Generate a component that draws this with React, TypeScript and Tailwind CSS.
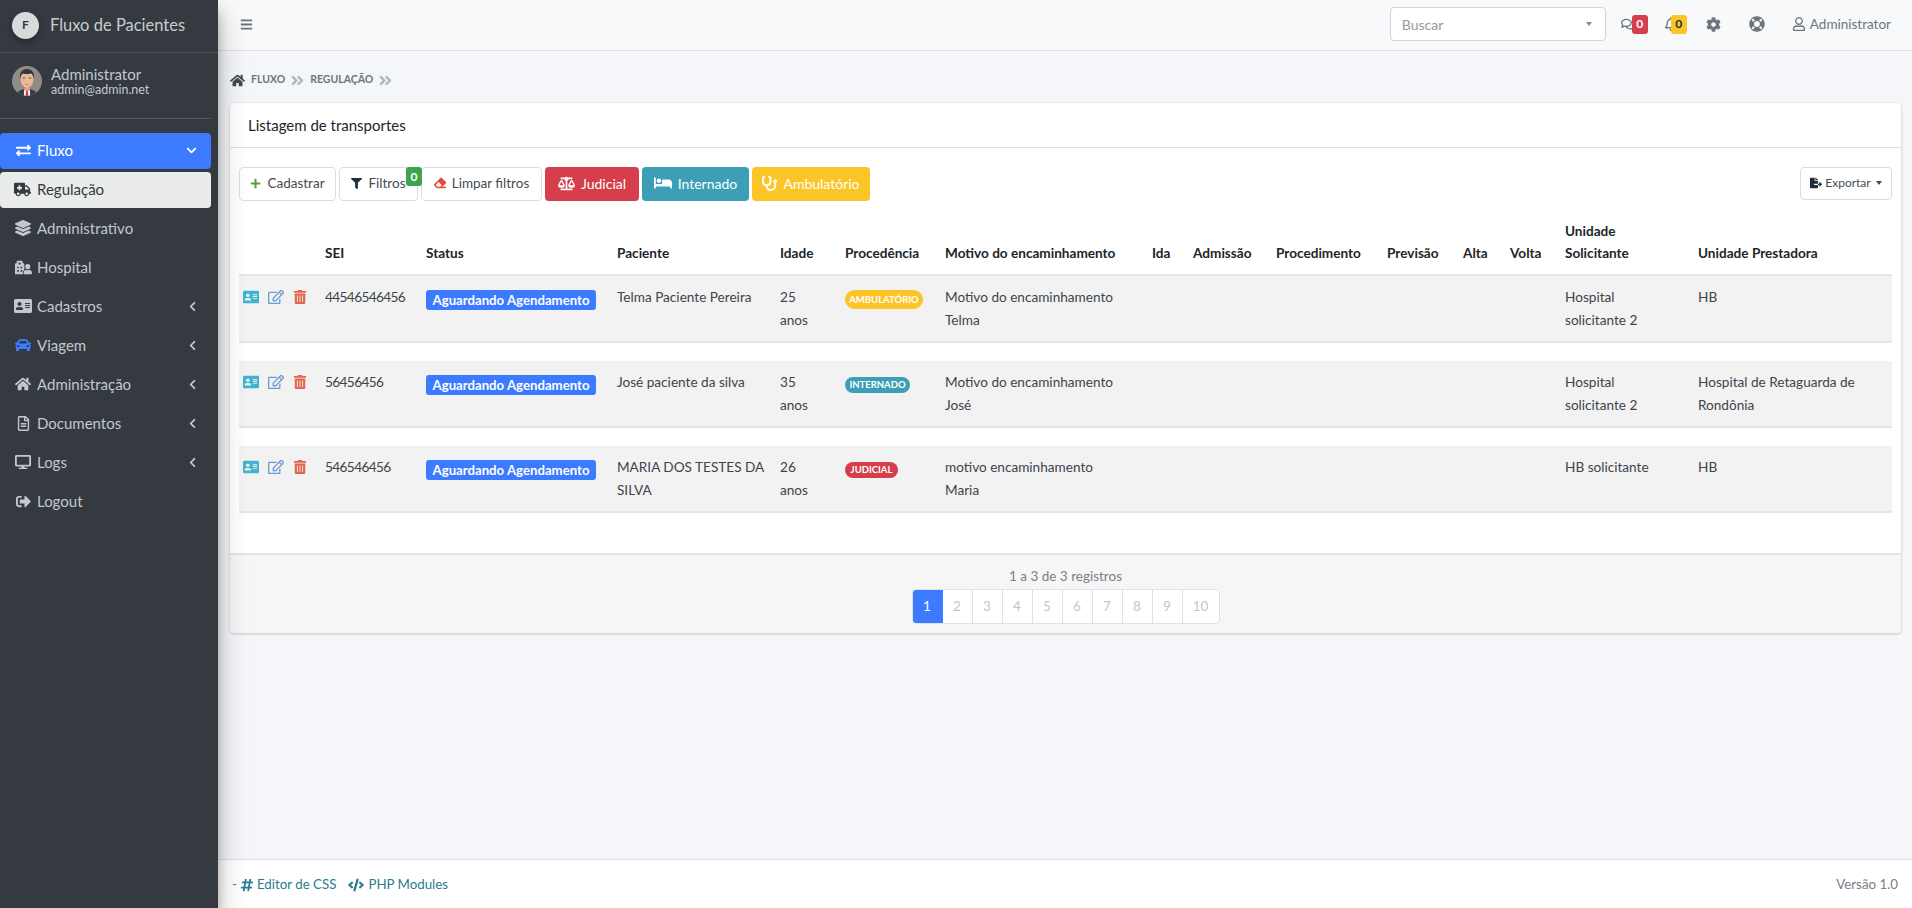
import { Fragment, type ReactNode } from "react"
import {
  FaAddressCard,
  FaAmbulance,
  FaAngleDoubleRight,
  FaBalanceScale,
  FaBars,
  FaBed,
  FaCar,
  FaChevronDown,
  FaChevronLeft,
  FaCode,
  FaCog,
  FaDesktop,
  FaEraser,
  FaExchangeAlt,
  FaFileExport,
  FaFilter,
  FaHashtag,
  FaHome,
  FaHospitalUser,
  FaLayerGroup,
  FaLifeRing,
  FaPlus,
  FaRegBell,
  FaRegComments,
  FaRegEdit,
  FaRegFileAlt,
  FaRegUser,
  FaSignOutAlt,
  FaStethoscope,
  FaTrashAlt,
} from "react-icons/fa"

const menu = [
  { label: "Administrativo", icon: <FaLayerGroup className="text-[16px]" /> },
  { label: "Hospital", icon: <FaHospitalUser className="text-[17px]" /> },
  { label: "Cadastros", icon: <FaAddressCard className="text-[18px]" />, arrow: true },
  { label: "Viagem", icon: <FaCar className="text-[16px] text-[#3c7bff]" />, arrow: true },
  { label: "Administração", icon: <FaHome className="text-[16px]" />, arrow: true },
  { label: "Documentos", icon: <FaRegFileAlt className="text-[15px]" />, arrow: true },
  { label: "Logs", icon: <FaDesktop className="text-[16px]" />, arrow: true },
  { label: "Logout", icon: <FaSignOutAlt className="text-[15px]" /> },
]

const columns = [
  { label: "", width: "w-[78px]" },
  { label: "SEI", width: "w-[101px]" },
  { label: "Status", width: "w-[191px]" },
  { label: "Paciente", width: "w-[163px]" },
  { label: "Idade", width: "w-[65px]" },
  { label: "Procedência", width: "w-[100px]" },
  { label: "Motivo do encaminhamento", width: "w-[207px]" },
  { label: "Ida", width: "w-[41px]" },
  { label: "Admissão", width: "w-[83px]" },
  { label: "Procedimento", width: "w-[111px]" },
  { label: "Previsão", width: "w-[76px]" },
  { label: "Alta", width: "w-[47px]" },
  { label: "Volta", width: "w-[55px]" },
  { label: "Unidade Solicitante", width: "w-[133px] " },
  { label: "Unidade Prestadora", width: "w-[202px]" },
]

const rows = [
  {
    sei: "44546546456",
    paciente: "Telma Paciente Pereira",
    idade: "25",
    origem: "AMBULATÓRIO",
    origemClass: "bg-[#fcc527] h-[19px] w-[78px]",
    motivo: "Motivo do encaminhamento",
    nome: "Telma",
    solicitante: ["Hospital", "solicitante 2"],
    prestadora: "HB",
  },
  {
    sei: "56456456",
    paciente: "José paciente da silva",
    idade: "35",
    origem: "INTERNADO",
    origemClass: "bg-[#3c9fb6] h-[16px] w-[65px]",
    motivo: "Motivo do encaminhamento",
    nome: "José",
    solicitante: ["Hospital", "solicitante 2"],
    prestadora: "Hospital de Retaguarda de Rondônia",
  },
  {
    sei: "546546456",
    paciente: "MARIA DOS TESTES DA SILVA",
    idade: "26",
    origem: "JUDICIAL",
    origemClass: "bg-[#d43f4b] h-[16px] w-[53px]",
    motivo: "motivo encaminhamento",
    nome: "Maria",
    solicitante: ["HB solicitante"],
    prestadora: "HB",
  },
]

function Avatar() {
  return (
    <svg viewBox="0 0 30 30" className="h-[30px] w-[30px] shrink-0 rounded-full">
      <rect width="30" height="30" fill="#8f8c87" />
      <path d="M4 30c1-5 5-6 8-7h6c3 1 7 2 8 7z" fill="#3a3d42" />
      <path d="M12 23l3 3 3-3v7h-6z" fill="#f4f4f4" />
      <path d="M14.2 25h1.6l.6 5h-2.8z" fill="#d8343c" />
      <rect x="12.5" y="18" width="5" height="7" fill="#dca27f" />
      <ellipse cx="15" cy="13.5" rx="6.4" ry="8" fill="#eab998" />
      <path d="M8 13c-1-7 3-10 7-10s8 3 7 10c-.6-3-1.4-5-3-5.500-3 .8-6 .8-8 0-1.600.5-2.400 2.500-3 5.500z" fill="#33363a" />
      <path d="M10.500 12h3M16.500 12h3" stroke="#5b4034" strokeWidth=".8" />
      <path d="M13 18.500h4" stroke="#b9745f" strokeWidth=".7" />
    </svg>
  )
}

function Sidebar() {
  return (
    <aside className="relative z-10 flex h-full w-[218px] shrink-0 flex-col bg-[#343a40] pr-[7px] text-[16px] text-[#c2c7d0] shadow-[0_14px_28px_rgba(0,0,0,0.25),0_10px_10px_rgba(0,0,0,0.22)]">
      <div className="-mr-[7px] flex h-[53px] items-center gap-[11px] border-b border-[#4b545c] pb-[2px] pl-[12px]">
        <span className="flex h-[27px] w-[27px] items-center justify-center rounded-full bg-[#d9dadc] text-[12px] font-bold text-[#343a40] shadow-[0_3px_6px_rgba(0,0,0,0.3)]">
          F
        </span>
        <span className="text-[16.500px] text-[#c9cccf]">Fluxo de Pacientes</span>
      </div>
      <div className="flex h-[66px] items-start gap-[9px] border-b border-[#4f5962] pl-[12px] pt-[13px]">
        <Avatar />
        <div className="leading-none">
          <div className="mt-[1px] text-[15px] text-[#c2c7d0]">Administrator</div>
          <div className="mt-[2px] text-[12.500px] text-[#c2c7d0]">admin@admin.net</div>
        </div>
      </div>
      <nav className="mt-[14px] flex flex-col gap-[3px] text-[15px] leading-[22px]">
        <div className="flex h-[36px] items-center rounded-[4px] bg-[#3c7bff] pb-[2px] text-white">
          <span className="flex w-[37px] justify-center pl-[10px]">
            <FaExchangeAlt />
          </span>
          <span>Fluxo</span>
          <FaChevronDown className="ml-auto mr-[14px] text-[11px]" />
        </div>
        <div className="flex h-[36px] items-center rounded-[4px] bg-[#eaebeb] pb-[2px] text-[#343a40]">
          <span className="flex w-[37px] justify-center pl-[8px] text-[17px]">
            <FaAmbulance />
          </span>
          <span>Regulação</span>
        </div>
        {menu.map((item) => (
          <div key={item.label} className="flex h-[36px] items-center pb-[2px]">
            <span className="flex w-[37px] justify-center pl-[9px]">{item.icon}</span>
            <span>{item.label}</span>
            {item.arrow && <FaChevronLeft className="ml-auto mr-[13px] text-[11px]" />}
          </div>
        ))}
      </nav>
    </aside>
  )
}

function Counter({ value, className }: { value: string; className: string }) {
  return (
    <span className={`absolute top-0 flex h-[19px] w-[16px] items-center justify-center rounded-[3px] text-[12px] font-bold ${className}`}>
      {value}
    </span>
  )
}

function Topbar() {
  return (
    <header className="flex h-[51px] shrink-0 items-center border-b border-[#dee2e6] bg-[#f8f9fa] pb-[2px] pr-[21px] text-[#6c757d]">
      <FaBars className="ml-[22px] text-[13px]" />
      <div className="ml-auto flex h-[34px] w-[216px] items-center justify-between rounded-[4px] border border-[#ced4da] bg-white pl-[11px] pr-[13px] text-[14px] text-[#999]">
        Buscar
        <span className="h-0 w-0 border-x-[3px] border-t-[4px] border-x-transparent border-t-[#888]" />
      </div>
      <div className="relative ml-[15px] flex h-[19px] w-[27px] items-center">
        <FaRegComments className="text-[15px]" />
        <Counter value="0" className="left-[11px] bg-[#d53e4c] text-white" />
      </div>
      <div className="relative ml-[16px] flex h-[19px] w-[23px] items-center">
        <FaRegBell className="text-[14px]" />
        <Counter value="0" className="left-[7px] bg-[#fcc527] text-[#1f2d3d]" />
      </div>
      <FaCog className="ml-[19px] text-[15px]" />
      <FaLifeRing className="ml-[28px] text-[16px]" />
      <FaRegUser className="ml-[27px] text-[14px]" />
      <span className="ml-[4px] text-[13.500px]">Administrator</span>
    </header>
  )
}

function Crumbs() {
  return (
    <div className="flex h-[52px] shrink-0 items-center pl-[12px] pt-[6px] text-[10.500px] font-bold uppercase text-[#6c757d]">
      <FaHome className="mr-[6px] text-[15px] text-[#444b52]" />
      Fluxo
      <FaAngleDoubleRight className="mx-[5px] text-[15px] text-[#adb5bd]" />
      Regulação
      <FaAngleDoubleRight className="mx-[5px] text-[15px] text-[#adb5bd]" />
    </div>
  )
}

function Action({ icon, label, className }: { icon: ReactNode; label: string; className: string }) {
  return (
    <button className={`flex h-[34px] items-center justify-center gap-[6px] rounded-[4px] pb-[2px] text-[13.500px] ${className}`}>
      {icon}
      {label}
    </button>
  )
}

function Toolbar() {
  const outline = "border border-[#d9dde0] bg-white text-[#444b52]"
  return (
    <div className="flex items-start gap-[3px] pt-[19px]">
      <Action className={`w-[97px] ${outline}`} icon={<FaPlus className="text-[11px] text-[#5c9a3c]" />} label="Cadastrar" />
      <div className="relative">
        <Action className={`w-[79px] ${outline}`} icon={<FaFilter className="text-[11px] text-[#1f2d3d]" />} label="Filtros" />
        <span className="absolute left-[67px] top-0 flex h-[19px] w-[16px] items-center justify-center rounded-[3px] bg-[#3fa34d] text-[12px] font-bold text-white">
          0
        </span>
      </div>
      <Action className={`w-[121px] ${outline}`} icon={<FaEraser className="text-[12px] text-[#e8483f]" />} label="Limpar filtros" />
      <Action className="w-[94px] bg-[#d43f4b] text-[14px] text-white" icon={<FaBalanceScale className="text-[17px]" />} label="Judicial" />
      <Action className="w-[107px] bg-[#3c9fb6] text-[14px] text-white" icon={<FaBed className="text-[18px]" />} label="Internado" />
      <Action className="w-[118px] bg-[#fcc527] text-[14px] text-white" icon={<FaStethoscope className="text-[15px]" />} label="Ambulatório" />
      <button className={`ml-auto flex h-[33px] w-[92px] items-center justify-center gap-[3px] rounded-[4px] pb-[2px] text-[12px] ${outline}`}>
        <FaFileExport className="text-[12px] text-[#1f2d3d]" />
        Exportar
        <span className="ml-[2px] h-0 w-0 border-x-[3px] border-t-[4px] border-x-transparent border-t-[#444b52]" />
      </button>
    </div>
  )
}

function Listing() {
  return (
    <table className="mt-[8px] w-[1653px] table-fixed border-collapse text-[13.600px] leading-[23px] text-[#3d444b]">
      <colgroup>
        {columns.map((col, i) => (
          <col key={i} className={col.width} />
        ))}
      </colgroup>
      <thead>
        <tr className="border-b-2 border-[#e3e5e8]">
          {columns.map((col, i) => (
            <th key={i} className="px-[8px] pb-[10px] pt-[11px] text-left align-bottom font-bold leading-[22px] text-[#212529]">
              {col.label === "Unidade Solicitante" ? (
                <>
                  Unidade
                  <br />
                  Solicitante
                </>
              ) : (
                col.label
              )}
            </th>
          ))}
        </tr>
      </thead>
      <tbody>
        {rows.map((row, i) => (
          <Fragment key={row.sei}>
            <tr className="border-b-2 border-[#e3e5e8] bg-[#f2f2f2] align-top">
              <td className="pb-[9px] pl-[4px] pt-[13px]">
                <div className="flex items-center gap-[9px] text-[15px]">
                  <FaAddressCard className="text-[16px] text-[#3fb4d0]" />
                  <FaRegEdit className="text-[16px] text-[#6c9bd2]" />
                  <FaTrashAlt className="text-[14px] text-[#e2654f]" />
                </div>
              </td>
              <td className="px-[8px] pb-[9px] pt-[10px] tracking-[-0.6px]">{row.sei}</td>
              <td className="px-[8px] pb-[9px] pt-[14px]">
                <span className="flex h-[20px] w-[170px] items-center justify-center rounded-[3px] bg-[#3c7bff] text-[13.200px] font-bold text-white">
                  Aguardando Agendamento
                </span>
              </td>
              <td className="px-[8px] pb-[9px] pt-[10px]">{row.paciente}</td>
              <td className="px-[8px] pb-[9px] pt-[10px]">
                {row.idade}
                <br />
                anos
              </td>
              <td className="px-[8px] pb-[9px] pt-[11px]">
                <span className={`inline-flex items-center justify-center rounded-full text-[9.500px] font-bold leading-none text-white ${row.origemClass}`}>
                  {row.origem}
                </span>
              </td>
              <td className="px-[8px] pb-[9px] pt-[10px]">
                {row.motivo}
                <br />
                {row.nome}
              </td>
              <td colSpan={6} />
              <td className="px-[8px] pb-[9px] pt-[10px]">
                {row.solicitante.map((line, j) => (
                  <Fragment key={line}>
                    {j > 0 && <br />}
                    {line}
                  </Fragment>
                ))}
              </td>
              <td className="px-[8px] pb-[9px] pt-[10px]">{row.prestadora}</td>
            </tr>
            {i < rows.length - 1 && (
              <tr className="h-[19px]">
                <td colSpan={15} />
              </tr>
            )}
          </Fragment>
        ))}
      </tbody>
    </table>
  )
}

function Pagination() {
  const pages = ["1", "2", "3", "4", "5", "6", "7", "8", "9", "10"]
  return (
    <div className="flex h-[80px] flex-col items-center rounded-b-[4px] border-t-2 border-[#e3e5e8] bg-[#f6f6f6] pt-[11px] text-[13.500px]">
      <div className="leading-[20px] text-[#7a8087]">1 a 3 de 3 registros</div>
      <div className="mt-[3px] flex h-[35px] overflow-hidden rounded-[4px] border border-[#dee2e6] bg-white text-[#c4c7ca]">
        {pages.map((page) => (
          <span
            key={page}
            className={
              page === "1"
                ? "-m-[1px] mr-0 flex w-[31px] items-center justify-center bg-[#3c7bff] text-white"
                : "flex w-[30px] items-center justify-center border-r border-[#dee2e6] last:w-[36px] last:border-r-0"
            }
          >
            {page}
          </span>
        ))}
      </div>
    </div>
  )
}

export default function App() {
  return (
    <div className="flex h-screen w-full overflow-hidden bg-[#f4f6f9] font-[Lato,sans-serif]">
      <Sidebar />
      <main className="flex min-w-0 flex-1 flex-col">
        <Topbar />
        <Crumbs />
        <section className="ml-[12px] mr-[11px] h-[530px] shrink-0 rounded-[4px] bg-white shadow-[0_0_1px_rgba(0,0,0,0.13),0_1px_3px_rgba(0,0,0,0.2)]">
          <div className="flex h-[45px] items-center border-b border-[#dfe1e4] pl-[18px] text-[15px] text-[#212529]">
            Listagem de transportes
          </div>
          <div className="h-[405px] px-[9px]">
            <Toolbar />
            <Listing />
          </div>
          <Pagination />
        </section>
        <footer className="mt-auto flex h-[49px] shrink-0 items-center border-t border-[#dee2e6] bg-white pl-[14px] pr-[14px] pt-[2px] text-[13.300px] text-[#2b7a8f]">
          <span className="mr-[3px] text-[#6c757d]">-</span>
          <FaHashtag className="mr-[3px] text-[14px]" />
          Editor de CSS
          <FaCode className="ml-[12px] mr-[4px] text-[16px]" />
          PHP Modules
          <span className="ml-auto text-[#7a8087]">Versão 1.0</span>
        </footer>
      </main>
    </div>
  )
}
